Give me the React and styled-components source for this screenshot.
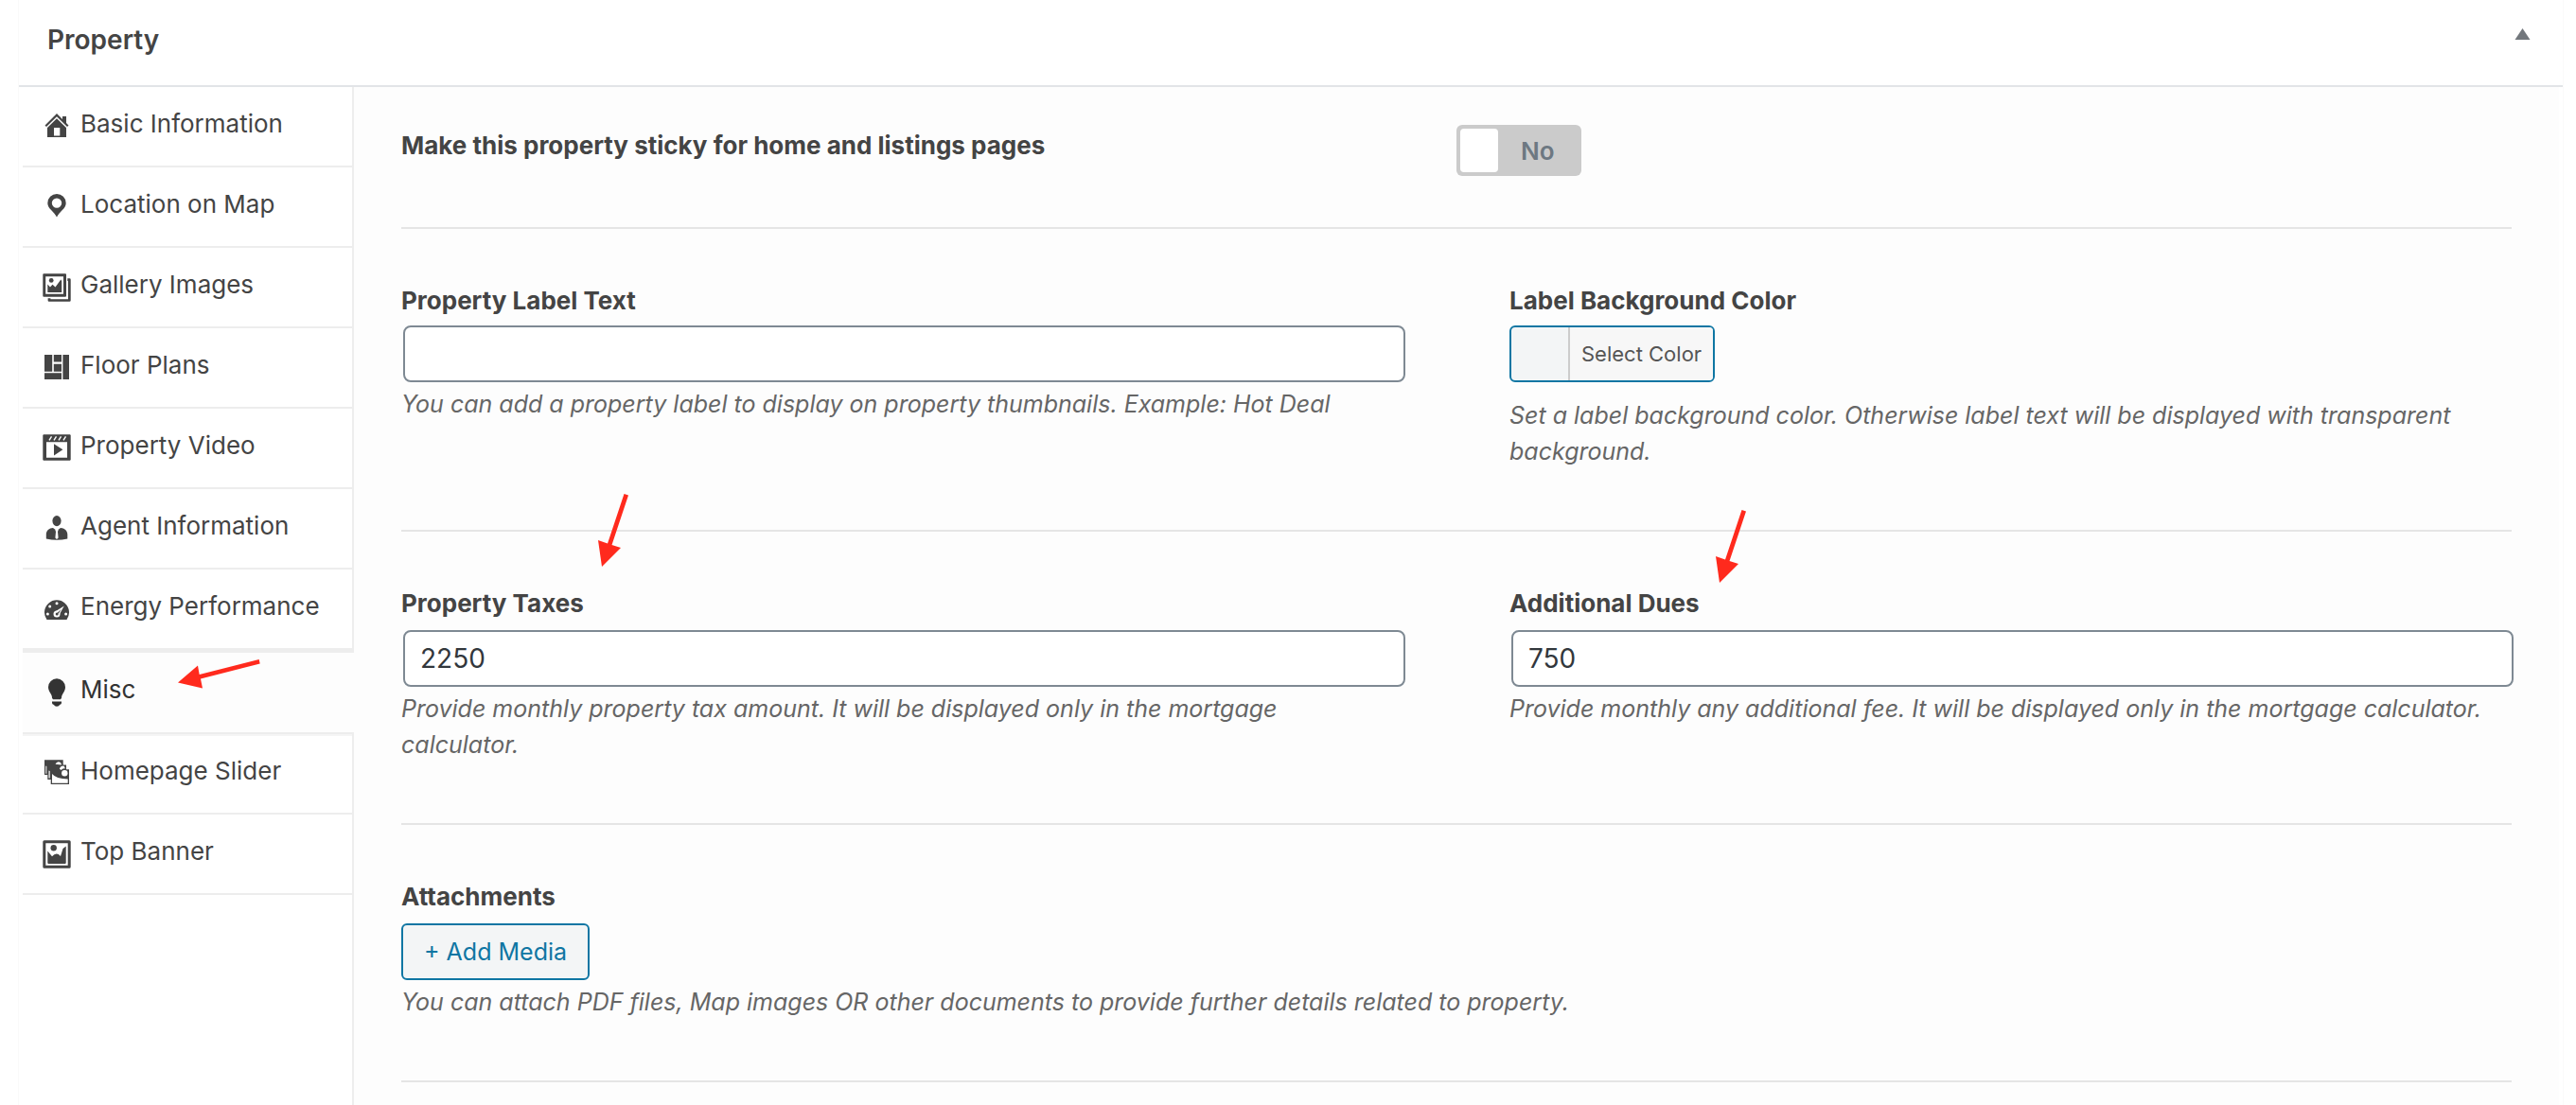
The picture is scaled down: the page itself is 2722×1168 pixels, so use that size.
import React, { useState } from "react";
import styled, { createGlobalStyle, css } from "styled-components";

const GlobalStyle = createGlobalStyle`
  *, *::before, *::after { box-sizing: border-box; }
  body {
    margin: 0;
    background: #fff;
    color: #444;
    font-family: Inter, "Liberation Sans", sans-serif;
    font-size: 26px;
  }
  button, input { font-family: inherit; }
`;

const Page = styled.div`
  min-height: 100vh;
  display: flex;
  padding: 0 14px 0 20px;
`;

const MetaBox = styled.section`
  flex: 1;
  min-width: 0;
  display: flex;
  flex-direction: column;
  box-shadow: 0 0 0 1px #fafafa;
`;

const Header = styled.header`
  display: flex;
  justify-content: space-between;
  align-items: flex-start;
  height: 92px;
  padding: 22px 34px 0 30px;
  border-bottom: 2px solid #e2e4e7;
`;

const Title = styled.h2`
  margin: 0;
  font-size: 28px;
  font-weight: 600;
  line-height: 40px;
`;

const Toggle = styled.button`
  display: flex;
  padding: 8px 0;
  border: 0;
  background: none;
  color: #72777c;
  cursor: pointer;
`;

const Body = styled.div`
  flex: 1;
  display: flex;
  padding: 0 4px;
`;

const Sidebar = styled.nav`
  flex: none;
  width: 350px;
  display: flex;
  flex-direction: column;

  &::after {
    content: "";
    flex: 1;
    border-right: 2px solid #ededed;
  }
`;

const Tabs = styled.ul`
  margin: 0;
  padding: 0;
  list-style: none;
`;

const Tab = styled.li`
  position: relative;
  border: 0 solid #ededed;
  border-width: 0 2px 2px 0;

  ${(p) =>
    p.$active &&
    css`
      border-width: 3px 0 2px;
      background: #fdfdfd;
      box-shadow: 0 2px 0 #f5f5f5;
    `}
`;

const TabLink = styled.a`
  display: flex;
  gap: 10px;
  padding: 20px 0 ${(p) => (p.$active ? 26 : 25)}px 21px;
  color: ${(p) => (p.$active ? "#333" : "#444")};
  line-height: 38px;
  text-decoration: none;
`;

const Icon = styled.svg`
  flex: none;
  width: 30px;
  height: 30px;
  margin-top: 7px;
  fill: currentColor;
`;

const Main = styled.main`
  flex: 1;
  min-width: 0;
  padding: 0 50px;
  background: #fdfdfd;
`;

const Row = styled.div`
  display: grid;
  grid-template-columns: 1fr 1fr;
  column-gap: 112px;
  padding: 56px 0 64px;
  border-bottom: 2px solid #e5e5e5;
`;

const SwitchRow = styled(Row)`
  column-gap: 0;
  padding: 40px 0 54px;
`;

const Field = styled.div`
  min-width: 0;
  grid-column: ${(p) => (p.$wide ? "1 / -1" : "auto")};
`;

const Label = styled.label`
  display: block;
  width: fit-content;
  position: relative;
  margin-bottom: ${(p) => (p.$tight ? 6 : 8)}px;
  font-weight: 700;
  line-height: 40px;
`;

const SwitchLabel = styled(Label)`
  line-height: 44px;
  margin: 0;
`;

const TextInput = styled.input`
  display: block;
  width: 100%;
  height: 60px;
  margin-left: 2px;
  padding: 0 16px;
  border: 2px solid #7e8993;
  border-radius: 8px;
  background: #fff;
  color: #32373c;
  font-size: 28px;
`;

const Help = styled.p`
  margin: ${(p) => (p.$loose ? 16 : 4)}px 0 0;
  padding-right: 20px;
  color: #666;
  font-size: 25px;
  font-style: italic;
  line-height: 38px;
`;

const Switch = styled.label`
  position: relative;
  display: flex;
  align-items: center;
  gap: 24px;
  width: 132px;
  height: 54px;
  padding: 4px;
  border-radius: 6px;
  background: #cbcbcb;
  color: #6d7882;
  font-weight: 600;
  cursor: pointer;
`;

const SwitchInput = styled.input`
  position: absolute;
  inset: 0;
  width: 100%;
  height: 100%;
  margin: 0;
  opacity: 0;
  cursor: pointer;
`;

const Thumb = styled.span`
  width: 40px;
  height: 46px;
  border-radius: 4px;
  background: #fff;
`;

const ColorButton = styled.button`
  display: flex;
  height: 60px;
  padding: 0;
  overflow: hidden;
  border: 2px solid #0f76a3;
  border-radius: 6px;
  background: #f3f5f6;
  color: #555;
  font-size: 22px;
  line-height: 56px;
  cursor: pointer;
`;

const Swatch = styled.span`
  width: 60px;
`;

const ColorText = styled.span`
  padding: 0 12px;
  border-left: 2px solid #ccc;
  background: #f7f7f7;
`;

const MediaButton = styled.button`
  display: block;
  height: 60px;
  padding: 0 22px;
  border: 2px solid #0f76a3;
  border-radius: 6px;
  background: #f3f5f6;
  color: #0f76a3;
  font-size: 25px;
  cursor: pointer;
`;

const ArrowMark = styled.svg`
  position: absolute;
  left: ${(p) => p.$left}px;
  top: ${(p) => p.$top}px;
  fill: #ff2a1d;
  pointer-events: none;
`;

const DownArrow = ({ left, top }) => (
  <ArrowMark $left={left} $top={top} width="34" height="80" viewBox="0 0 34 80" aria-hidden="true">
    <path d="M28.5 1 L33 2.5 L15.5 55 L25 58 L5 78 L1 50 L11 53.5 Z" />
  </ArrowMark>
);

const SideArrow = ({ left, top }) => (
  <ArrowMark $left={left} $top={top} width="90" height="34" viewBox="0 0 90 34" aria-hidden="true">
    <path d="M1 25.5 L22 7.5 L23.7 17 L86.7 1 L87.7 5.5 L25 21.5 L27 31.5 Z" />
  </ArrowMark>
);

const icons = {
  home: (
    <>
      <path d="M15 1 L21 7 V4 H25 V11 L27.5 13.4 L26 15 L15 4.2 L4 15 L2.5 13.4 Z" />
      <path fillRule="evenodd" d="M15 6.2 L25 16 V26 H5 V16 Z M12 16 V24.6 H18.3 V16 Z" />
    </>
  ),
  pin: (
    <path
      fillRule="evenodd"
      d="M15 1 A9.7 9.7 0 0 1 24.7 10.7 C24.7 16.5 17.8 19.5 15 25.5 C12.2 19.5 5.3 16.5 5.3 10.7 A9.7 9.7 0 0 1 15 1 Z M15 5.4 A5.2 5.2 0 1 0 15 15.8 A5.2 5.2 0 1 0 15 5.4 Z"
    />
  ),
  gallery: (
    <>
      <path fillRule="evenodd" d="M1.3 .3 H24 Q25 .3 25 1.3 V23.7 Q25 24.7 24 24.7 H1.3 Q.3 24.7 .3 23.7 V1.3 Q.3 .3 1.3 .3 Z M3.2 3.2 V21.8 H22 V3.2 Z" />
      <path d="M5.3 11.5 L8 14.5 L10.5 11.7 L13.5 14.5 L19.3 6.5 L20.2 8 V20 H5.3 Z" />
      <circle cx="9.2" cy="7.4" r="2.4" />
      <path d="M26.3 5.3 H28.5 Q29.7 5.3 29.7 6.5 V28.5 Q29.7 29.7 28.5 29.7 H6.8 Q5.6 29.7 5.6 28.5 V26.2 H8.4 V27.2 H27 V8 H26.3 Z" />
    </>
  ),
  floor: <path d="M2 1 H10.2 V18.7 H2 Z M11.8 1 H20 V8.4 H11.8 Z M11.8 10.8 H20 V18.7 H11.8 Z M2 20.2 H20 V27 H2 Z M21.4 1 H28 V27 H21.4 Z" />,
  video: (
    <>
      <path fillRule="evenodd" d="M1 .3 H29 L29.7 1 V27 L29 27.7 H1 L.3 27 V1 Z M4 8.3 V24.7 H26 V8.3 Z" />
      <path d="M12 10.2 L21.4 16.3 L12 22.4 Z" />
      <path d="M7 6.3 L9.5 2.3 M12 6.3 L14.5 2.3 M17 6.3 L19.5 2.3 M22 6.3 L24.5 2.3" stroke="#fff" strokeWidth="1.4" />
    </>
  ),
  agent: (
    <>
      <ellipse cx="15" cy="6.6" rx="4.6" ry="5.6" />
      <path d="M11 14 L15 17 L19 14 C23 14 26.3 17 26.3 21 V25.5 Q15 28 3.8 25.5 V21 C3.8 17 7 14 11 14 Z" />
      <path d="M13.3 16 H16.7 L16 18 L16.6 24.5 L15 26 L13.4 24.5 L14 18 Z" fill="#fff" />
    </>
  ),
  gauge: (
    <>
      <path d="M4.5 26 A13 13 0 1 1 25.5 26 Z" />
      <g fill="#fff">
        <circle cx="15" cy="8.7" r="1.5" />
        <circle cx="7.7" cy="12" r="1.5" />
        <circle cx="5.4" cy="20" r="1.5" />
        <circle cx="24.6" cy="20" r="1.5" />
        <circle cx="15" cy="20" r="3.5" />
        <path d="M22.8 11.6 L18 20 L14 17 Z" />
      </g>
      <circle cx="15.2" cy="20" r="1.5" />
      <path d="M15.5 19 L19.5 15 L17 19.5 Z" />
    </>
  ),
  bulb: (
    <path d="M15 .3 A9 9 0 0 1 24 9.3 C24 14.5 20 16 20 20.8 L19 22.3 H11 L10 20.8 C10 16 6 14.5 6 9.3 A9 9 0 0 1 15 .3 Z M10 24.5 H20 V26 Q20 27.3 18 28 Q17.5 29.7 15 29.7 Q12.5 29.7 12 28 Q10 27.3 10 26 Z" />
  ),
  slider: (
    <>
      <path d="M2 .3 H21.7 V5.5 H25 V10.3 H28 V26 H8.7 V21 H5.3 V16 H2 Z" />
      <g fill="#fff">
        <path d="M3.3 6.5 L4.3 7 V14.7 H3.3 Z M6.5 11.5 L7.7 12 V19.5 H6.5 Z M10 15 Q14 20 26.7 20.5 V24.7 H10 Z" />
        <circle cx="23.3" cy="14.3" r="3.2" />
        <path d="M13.5 4.8 Q15 1.5 18 2.5 Q19.7 3 20 5.5 Z M17.8 9.5 Q19 6.3 22 6.6 Q23.6 7 23.7 9.4 Q21 9 19.5 11 Z" />
      </g>
    </>
  ),
  banner: (
    <>
      <path fillRule="evenodd" d="M1.8 .3 H28.2 Q29.7 .3 29.7 1.8 V28.2 Q29.7 29.7 28.2 29.7 H1.8 Q.3 29.7 .3 28.2 V1.8 Q.3 .3 1.8 .3 Z M3.3 3.3 V26.7 H26.7 V3.3 Z" />
      <path d="M5.3 11.5 L10 17.3 Q14.5 12 19 17 L21.5 9 L24.7 6.5 V24 Q24.7 25 23.7 25 H6.3 Q5.3 25 5.3 24 Z" />
      <circle cx="11.7" cy="8.3" r="3.2" />
    </>
  ),
};

const tabs = [
  { icon: "home", text: "Basic Information" },
  { icon: "pin", text: "Location on Map" },
  { icon: "gallery", text: "Gallery Images" },
  { icon: "floor", text: "Floor Plans" },
  { icon: "video", text: "Property Video" },
  { icon: "agent", text: "Agent Information" },
  { icon: "gauge", text: "Energy Performance" },
  { icon: "bulb", text: "Misc", active: true },
  { icon: "slider", text: "Homepage Slider" },
  { icon: "banner", text: "Top Banner" },
];

export default function App() {
  const [sticky, setSticky] = useState(false);

  return (
    <>
      <GlobalStyle />
      <Page>
        <MetaBox>
          <Header>
            <Title>Property</Title>
            <Toggle type="button" aria-label="Toggle panel">
              <svg width="17" height="12" viewBox="0 0 17 12" fill="currentColor" aria-hidden="true">
                <path d="M8.5 0 L16.5 12 H.5 Z" />
              </svg>
            </Toggle>
          </Header>
          <Body>
            <Sidebar>
              <Tabs>
                {tabs.map((tab) => (
                  <Tab key={tab.text} $active={tab.active}>
                    <TabLink href="#" $active={tab.active}>
                      <Icon viewBox="0 0 30 30" aria-hidden="true">
                        {icons[tab.icon]}
                      </Icon>
                      {tab.text}
                    </TabLink>
                    {tab.active && <SideArrow left={163} top={6} />}
                  </Tab>
                ))}
              </Tabs>
            </Sidebar>
            <Main>
              <SwitchRow>
                <SwitchLabel htmlFor="sticky">Make this property sticky for home and listings pages</SwitchLabel>
                <Switch>
                  <SwitchInput id="sticky" type="checkbox" checked={sticky} onChange={() => setSticky(!sticky)} />
                  <Thumb />
                  {sticky ? "Yes" : "No"}
                </Switch>
              </SwitchRow>
              <Row>
                <Field>
                  <Label htmlFor="label-text" $tight>Property Label Text</Label>
                  <TextInput id="label-text" type="text" />
                  <Help>You can add a property label to display on property thumbnails. Example: Hot Deal</Help>
                </Field>
                <Field>
                  <Label htmlFor="label-color" $tight>Label Background Color</Label>
                  <ColorButton id="label-color" type="button">
                    <Swatch />
                    <ColorText>Select Color</ColorText>
                  </ColorButton>
                  <Help $loose>
                    Set a label background color. Otherwise label text will be displayed with transparent background.
                  </Help>
                </Field>
              </Row>
              <Row>
                <Field>
                  <Label htmlFor="taxes">
                    Property Taxes
                    <DownArrow left={207} top={-97} />
                  </Label>
                  <TextInput id="taxes" type="text" defaultValue="2250" />
                  <Help>Provide monthly property tax amount. It will be displayed only in the mortgage calculator.</Help>
                </Field>
                <Field>
                  <Label htmlFor="dues">
                    Additional Dues
                    <DownArrow left={217} top={-80} />
                  </Label>
                  <TextInput id="dues" type="text" defaultValue="750" />
                  <Help>Provide monthly any additional fee. It will be displayed only in the mortgage calculator.</Help>
                </Field>
              </Row>
              <Row>
                <Field $wide>
                  <Label htmlFor="attachments">Attachments</Label>
                  <MediaButton id="attachments" type="button">+ Add Media</MediaButton>
                  <Help>You can attach PDF files, Map images OR other documents to provide further details related to property.</Help>
                </Field>
              </Row>
            </Main>
          </Body>
        </MetaBox>
      </Page>
    </>
  );
}
